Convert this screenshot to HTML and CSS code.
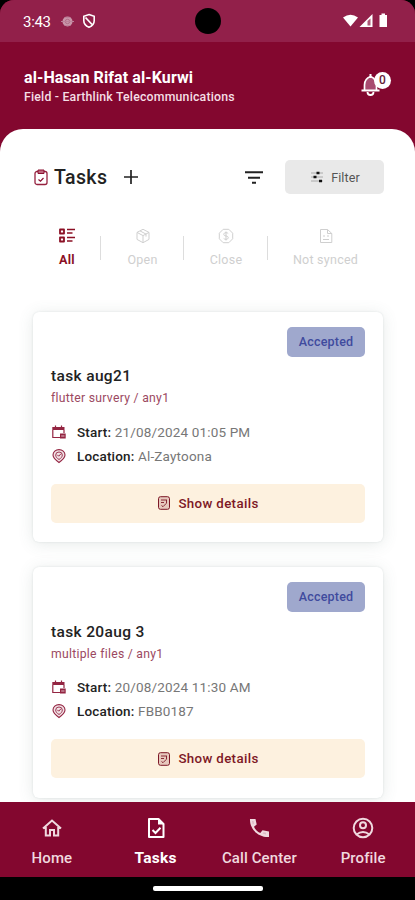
FILE: index.html
```html
<!DOCTYPE html>
<html lang="en">
<head>
<meta charset="utf-8">
<title>Tasks</title>
<link rel="stylesheet" href="styles.css">
</head>
<body>
<svg class="defs" width="0" height="0" aria-hidden="true">
  <symbol id="calendar" viewBox="0 0 16 16"><path d="M4.500 1.500v3M10.500 1.500v3M1.800 6v7.500H9M13 6v3" fill="none" stroke="currentColor" stroke-width="1.200"/><path d="M1.300 3h12.200v3H1.300zM9 9.500h5.700v5H9z" fill="currentColor"/><path d="M10.200 12h3.300" stroke="#fff" stroke-width=".7"/></symbol>
  <symbol id="pin" viewBox="0 0 16 16"><path d="M8 14.500C5 12.300 2 10 2 7a6 5.400 0 0 1 12 0C14 10 11 12.300 8 14.500z" fill="#94254222" stroke="currentColor" stroke-width="1.100"/><path d="M8 11.500C6 10.300 4.700 8.800 4.700 7a3.300 3 0 0 1 6.600 0c0 1.800-1.300 3.300-3.300 4.500z" fill="none" stroke="currentColor" stroke-width=".9"/><path d="M6.300 6.800l1.400 1.400 2.200-2.400" fill="none" stroke="currentColor"/></symbol>
  <symbol id="details" viewBox="0 0 14 16"><rect x="1.500" y="1.700" width="11" height="12.600" rx="2" fill="#8b1a2c30" stroke="currentColor"/><path d="M4 5h6M4 7.500h3M4.500 10.500l1.500 1.200 3.500-3.500M9.500 5v3" fill="none" stroke="currentColor" stroke-width=".9"/></symbol>
</svg>
<div class="screen">
  <header class="top">
    <div class="status">
      <span class="time">3:43</span>
      <svg class="dot" width="13" height="13" viewBox="0 0 13 13"><circle cx="6.500" cy="6.500" r="5" fill="#c995a9"/><circle cx="6.500" cy="6.500" r="2.200" fill="none" stroke="#b06f89"/><path d="M0 6.500h13M3.500 2.500h6M3.500 10.500h6" stroke="#bd819a"/></svg>
      <svg class="shield" width="14" height="16" viewBox="0 0 14 16"><path d="M7 1.500l5.200 1.800v4.500c0 3-2 5.200-5.200 6.500-3.200-1.300-5.200-3.500-5.200-6.500V3.300z" fill="none" stroke="#fff" stroke-width="1.600"/><path d="M3.500 4.500l6.500 7" stroke="#fff" stroke-width="1.800"/></svg>
      <span class="camera"></span>
      <svg class="signals" width="48" height="16" viewBox="0 0 48 16"><path d="M1 4.500Q8.500-1 16 4.500L8.500 13.500z" fill="#fff"/><path d="M17.500 14L30.500 1v13z" fill="#fff"/><path d="M25.500 8l3-2.500v7h-3z" fill="#92204a" opacity=".75"/><path d="M37.500 2h2V.5h3.500V2h2v12h-7.500z" fill="#fff"/></svg>
    </div>
    <div class="account">
      <div><h1>al-Hasan Rifat al-Kurwi</h1><p>Field - Earthlink Telecommunications</p></div>
      <div class="bell">
        <svg width="22" height="26" viewBox="0 0 22 26"><path d="M4.500 18v-5c0-4 2-7 6-8.500 4 1.500 6 4.500 6 8.500v5" fill="#a84b70" stroke="#fff" stroke-width="1.700"/><path d="M1.500 18.500h18" stroke="#fff" stroke-width="2"/><path d="M7.500 20a3 3 0 0 0 6 0" fill="none" stroke="#fff" stroke-width="1.800"/><path d="M10.500 2v4" stroke="#fff" stroke-width="2"/></svg>
        <span class="count">0</span>
      </div>
    </div>
  </header>
  <main class="sheet">
    <div class="toolbar">
      <svg class="clip" width="14" height="17" viewBox="0 0 14 17"><rect x="1" y="2.500" width="12" height="13" rx="2" fill="none" stroke="#96213f" stroke-width="1.300"/><path d="M4 1h6v3.500H4z" fill="#c06a80" stroke="#8b1030"/><path d="M4.500 10.500l2 1.700L9.500 9" fill="none" stroke="#8b1030" stroke-width="1.200"/></svg>
      <h2>Tasks</h2>
      <svg class="plus" width="14" height="14" viewBox="0 0 14 14"><path d="M7 0v14M0 7h14" stroke="#222" stroke-width="1.700"/></svg>
      <svg class="sort" width="18" height="13" viewBox="0 0 18 13"><path d="M0 1.200h18M3 6.700h12M7 11.700h4" stroke="#222" stroke-width="1.900"/></svg>
      <button class="filter"><svg width="12" height="12" viewBox="0 0 12 12"><path d="M0 2h12M0 6h12M0 10h12" stroke="#aaa"/><path d="M5.500 2h3M2.500 6h3M8 10h3" stroke="#111" stroke-width="2.700"/></svg><span>Filter</span></button>
    </div>
    <nav class="tabs">
      <div class="tab active"><svg width="18" height="16" viewBox="0 0 18 16"><path d="M2 1.500h4v4H2zM2 9.500h4v4H2z" fill="none" stroke="currentColor" stroke-width="1.800" stroke-linejoin="round"/><path d="M9 1.500h8M9 5h5.500M9 9.500h8M9 13h5.500" stroke="currentColor" stroke-width="1.700"/></svg><span>All</span></div>
      <div class="tab"><svg width="16" height="16" viewBox="0 0 16 16"><path d="M8 1.300l6 3.100v7L8 14.700l-6-3.300v-7zM2 4.400l6 3.200 6-3.200M8 7.600v7M5 2.900l6 3.200v2.500" fill="none" stroke="currentColor"/></svg><span>Open</span></div>
      <div class="tab"><svg width="16" height="16" viewBox="0 0 16 16"><path d="M5.200 1.300h5.600l3.900 3.900v5.600l-3.900 3.900H5.200l-3.900-3.900V5.200z" fill="none" stroke="currentColor"/><path d="M10.200 5.500Q9.500 4.700 8 4.700c-3 0-3 3.200 0 3.300s3 3.300 0 3.300q-1.500 0-2.300-.8M8 3.500v9" fill="none" stroke="currentColor"/></svg><span>Close</span></div>
      <div class="tab"><svg width="16" height="16" viewBox="0 0 16 16"><path d="M2.500 1.500h7l4.300 4v9H2.500zM9.500 1.500v4h4.300M5 8h2M9 8h2M5 11.500h6" fill="none" stroke="currentColor"/></svg><span>Not synced</span></div>
    </nav>
    <section class="cards">
      <article class="card">
        <span class="badge">Accepted</span>
        <h3>task aug21</h3>
        <p class="sub">flutter survery / any1</p>
        <div class="row"><svg width="16" height="16"><use href="#calendar"/></svg><span><b>Start:</b> 21/08/2024 01:05 PM</span></div>
        <div class="row"><svg width="16" height="16"><use href="#pin"/></svg><span><b>Location:</b> Al-Zaytoona</span></div>
        <button class="show"><svg width="14" height="16"><use href="#details"/></svg><span>Show details</span></button>
      </article>
      <article class="card">
        <span class="badge">Accepted</span>
        <h3>task 20aug 3</h3>
        <p class="sub">multiple files / any1</p>
        <div class="row"><svg width="16" height="16"><use href="#calendar"/></svg><span><b>Start:</b> 20/08/2024 11:30 AM</span></div>
        <div class="row"><svg width="16" height="16"><use href="#pin"/></svg><span><b>Location:</b> FBB0187</span></div>
        <button class="show"><svg width="14" height="16"><use href="#details"/></svg><span>Show details</span></button>
      </article>
    </section>
  </main>
  <nav class="bottom">
    <div class="item"><svg width="24" height="24" viewBox="0 0 24 24"><path d="M3 12.500L12 4.500l9 8M5.800 11v8.500h4.200v-5.500h4v5.500h4.200V11" fill="none" stroke="currentColor" stroke-width="2"/></svg><span>Home</span></div>
    <div class="item on"><svg width="24" height="24" viewBox="0 0 24 24"><path d="M5 3h9.500L19.500 8v13H5z" fill="none" stroke="currentColor" stroke-width="2" stroke-linejoin="round"/><path d="M14 3v5.500h5.500z" fill="currentColor"/><path d="M8.500 14l3 3 5-5.200" fill="none" stroke="currentColor" stroke-width="2"/></svg><span>Tasks</span></div>
    <div class="item call"><svg width="24" height="24" viewBox="0 0 24 24"><path d="M3 3h5.500l1.200 5.500-2.700 2.200q2 4.500 6.300 6.300l2.200-2.700L22 15.500V21C11 21.500 2.500 13 3 3z" fill="currentColor"/><path d="M5 5h1.500l.5 2.500-1.300 1zM15.500 17.500l1-1.300 2.500.6v1.700z" fill="#dcb8c4"/></svg><span>Call Center</span></div>
    <div class="item"><svg width="24" height="24" viewBox="0 0 24 24"><g fill="none" stroke="currentColor" stroke-width="2"><circle cx="12" cy="12" r="9.300"/><circle cx="12" cy="9.300" r="3"/><path d="M5.500 18.500q6.500-5 13 0"/></g></svg><span>Profile</span></div>
  </nav>
  <footer class="gesture"><span></span></footer>
</div>
</body>
</html>
```
FILE: styles.css
```css
* { box-sizing: border-box; margin: 0; padding: 0; }
body { background: #000; font-family: Roboto, sans-serif; color: #222; }
button { border: 0; font: inherit; }
svg { display: block; flex: none; }
span { white-space: nowrap; }
.defs { position: absolute; }
.screen { width: 415px; height: 900px; display: flex; flex-direction: column; overflow: hidden; border-radius: 14px 14px 0 0; background: #83072f; }
.top { height: 129px; flex: none; color: #fff; }
.status { height: 42px; background: #92204a; display: flex; align-items: center; padding: 0 25px 0 23px; }
.time { width: 38px; padding-top: 1px; font-size: 15px; letter-spacing: -.3px; }
.shield { margin-left: 8px; }
.camera { width: 26px; height: 26px; margin-left: 99px; border-radius: 50%; background: #000; }
.signals { margin-left: auto; }
.account { height: 87px; padding: 25px 24px 0; display: flex; justify-content: space-between; }
h1 { padding-top: 1px; font-size: 16px; line-height: 20px; font-weight: 700; letter-spacing: .1px; white-space: nowrap; }
.account p { font-size: 12.300px; line-height: 19px; font-weight: 500; letter-spacing: .2px; color: #f5dfe5; white-space: nowrap; }
.bell { position: relative; width: 31px; height: 30px; padding-top: 5px; }
.count { position: absolute; left: 14px; top: 5px; width: 17px; height: 17px; border-radius: 50%; background: #fff; color: #642038; font-size: 12px; line-height: 17px; text-align: center; font-weight: 500; }
.sheet { height: 673px; flex: none; overflow: hidden; border-radius: 23px 23px 0 0; background: #fff; padding: 31px 32px 0 33px; }
.toolbar { height: 34px; display: flex; align-items: center; }
.clip { margin-left: 1px; }
h2 { width: 54px; margin-left: 6px; font-size: 19.500px; font-weight: 500; letter-spacing: .4px; }
.plus { margin-left: 16px; }
.sort { margin-left: auto; margin-right: 22px; }
.filter { width: 99px; height: 34px; margin-right: -1px; display: flex; align-items: center; justify-content: center; gap: 8px; border-radius: 5px; background: #e9e9e9; color: #555; font-size: 12.500px; letter-spacing: .1px; }
.filter { padding-left: 2px; }
.tabs { display: grid; grid-template-columns: 68px 83px 84px 115px; margin-top: 34px; height: 40px; }
.tab { position: relative; display: flex; flex-direction: column; align-items: center; gap: 8px; color: #cfcfcf; font-size: 12.500px; line-height: 16px; letter-spacing: .25px; }
.tab.active { color: #8b1025; font-weight: 700; }
.tab:not(:last-child)::after { content: ""; position: absolute; right: 0; top: 8px; width: 1.500px; height: 24px; background: #ddd; }
.cards { margin-top: 43.500px; display: flex; flex-direction: column; gap: 25px; }
.card { height: 230.500px; flex: none; border-radius: 6px; background: #fff; padding: 15px 18px 0; box-shadow: 0 2px 16px rgba(80, 105, 100, .14), 0 0 2px rgba(60, 85, 85, .15); display: flex; flex-direction: column; }
.badge { align-self: flex-end; width: 78px; height: 30px; border-radius: 5px; background: #9fa8cd; color: #3f4b9e; font-size: 12.500px; line-height: 29px; text-align: center; font-weight: 500; letter-spacing: .2px; }
h3 { margin-top: 9.500px; font-size: 15.500px; line-height: 20px; font-weight: 500; letter-spacing: .35px; }
.sub { margin-top: 3px; font-size: 12.200px; line-height: 18px; color: #9c4961; letter-spacing: .28px; }
.row { height: 24px; display: flex; align-items: center; gap: 10px; font-size: 13.500px; letter-spacing: .17px; color: #777; }
.sub + .row { margin-top: 12.500px; }
.row svg { color: #942542; width: 16px; }
.row b { color: #222; font-weight: 500; }
.show { margin-top: 16px; height: 39px; flex: none; border-radius: 5px; background: #fdf1df; display: flex; align-items: center; justify-content: center; gap: 7px; color: #7d1826; font-size: 13.300px; font-weight: 500; letter-spacing: .35px; }
.bottom { height: 75px; flex: none; background: #83072f; color: #f0d9df; display: grid; grid-template-columns: repeat(4, 1fr); }
.item { display: flex; flex-direction: column; align-items: center; padding-top: 14px; gap: 8px; font-size: 15px; line-height: 21px; font-weight: 500; letter-spacing: .1px; }
.item.on { color: #fff; font-weight: 700; font-size: 15.500px; letter-spacing: .3px; }
.gesture { height: 23px; flex: none; background: #000; display: flex; justify-content: center; padding-top: 9px; }
.gesture span { width: 110px; height: 4.500px; border-radius: 2px; background: #fff; }
```
